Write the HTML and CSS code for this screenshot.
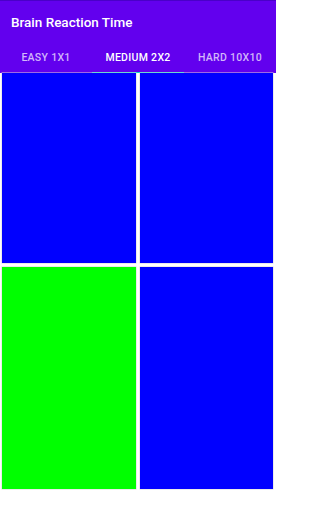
FILE: index.html
```html
<!DOCTYPE html>
<html>
<head>
<meta charset="utf-8">
<link rel="stylesheet" href="styles.css">
</head>
<body>
<div class="app">
  <header class="appbar">
    <div class="status"></div>
    <h1 class="title">Brain Reaction Time</h1>
    <nav class="tabs">
      <div class="tab">EASY 1X1</div>
      <div class="tab active">MEDIUM 2X2</div>
      <div class="tab">HARD 10X10</div>
    </nav>
  </header>
  <main class="grid">
    <div class="cell blue"></div>
    <div class="cell blue"></div>
    <div class="cell green"></div>
    <div class="cell blue"></div>
  </main>
</div>
</body>
</html>
```
FILE: styles.css
```css
html, body {
  margin: 0;
  padding: 0;
  background: #ffffff;
}
.app {
  width: 276px;
  height: 512px;
  display: flex;
  flex-direction: column;
  font-family: Roboto, "Liberation Sans", sans-serif;
}
.appbar {
  background: #6200ee;
  height: 73px;
  display: flex;
  flex-direction: column;
  box-sizing: border-box;
}
.status {
  height: 1px;
  background: #4a00c8;
}
.title {
  margin: 0;
  padding: 12px 0 0 11px;
  height: 32px;
  box-sizing: border-box;
  font-size: 13.5px;
  font-weight: 500;
  color: #ffffff;
  line-height: 18px;
}
.tabs {
  display: grid;
  grid-template-columns: repeat(3, 1fr);
  flex: 1;
}
.tab {
  display: flex;
  align-items: center;
  justify-content: center;
  font-size: 10.5px;
  font-weight: 500;
  letter-spacing: 0.3px;
  color: rgba(255, 255, 255, 0.72);
  box-sizing: border-box;
  padding-top: 9px;
  border-bottom: 1px solid transparent;
}
.tab.active {
  color: #ffffff;
  border-bottom-color: #03dac5;
}
.grid {
  display: grid;
  grid-template-columns: 134px 133px;
  grid-template-rows: 190px 222px;
  column-gap: 4px;
  row-gap: 4px;
  padding: 0 3px 0 2px;
}
.cell {
  box-sizing: border-box;
  box-shadow: 0 0 0 0.5px #d8d8d8;
}
.blue { background: #0000ff; }
.green { background: #00ff00; }
```
